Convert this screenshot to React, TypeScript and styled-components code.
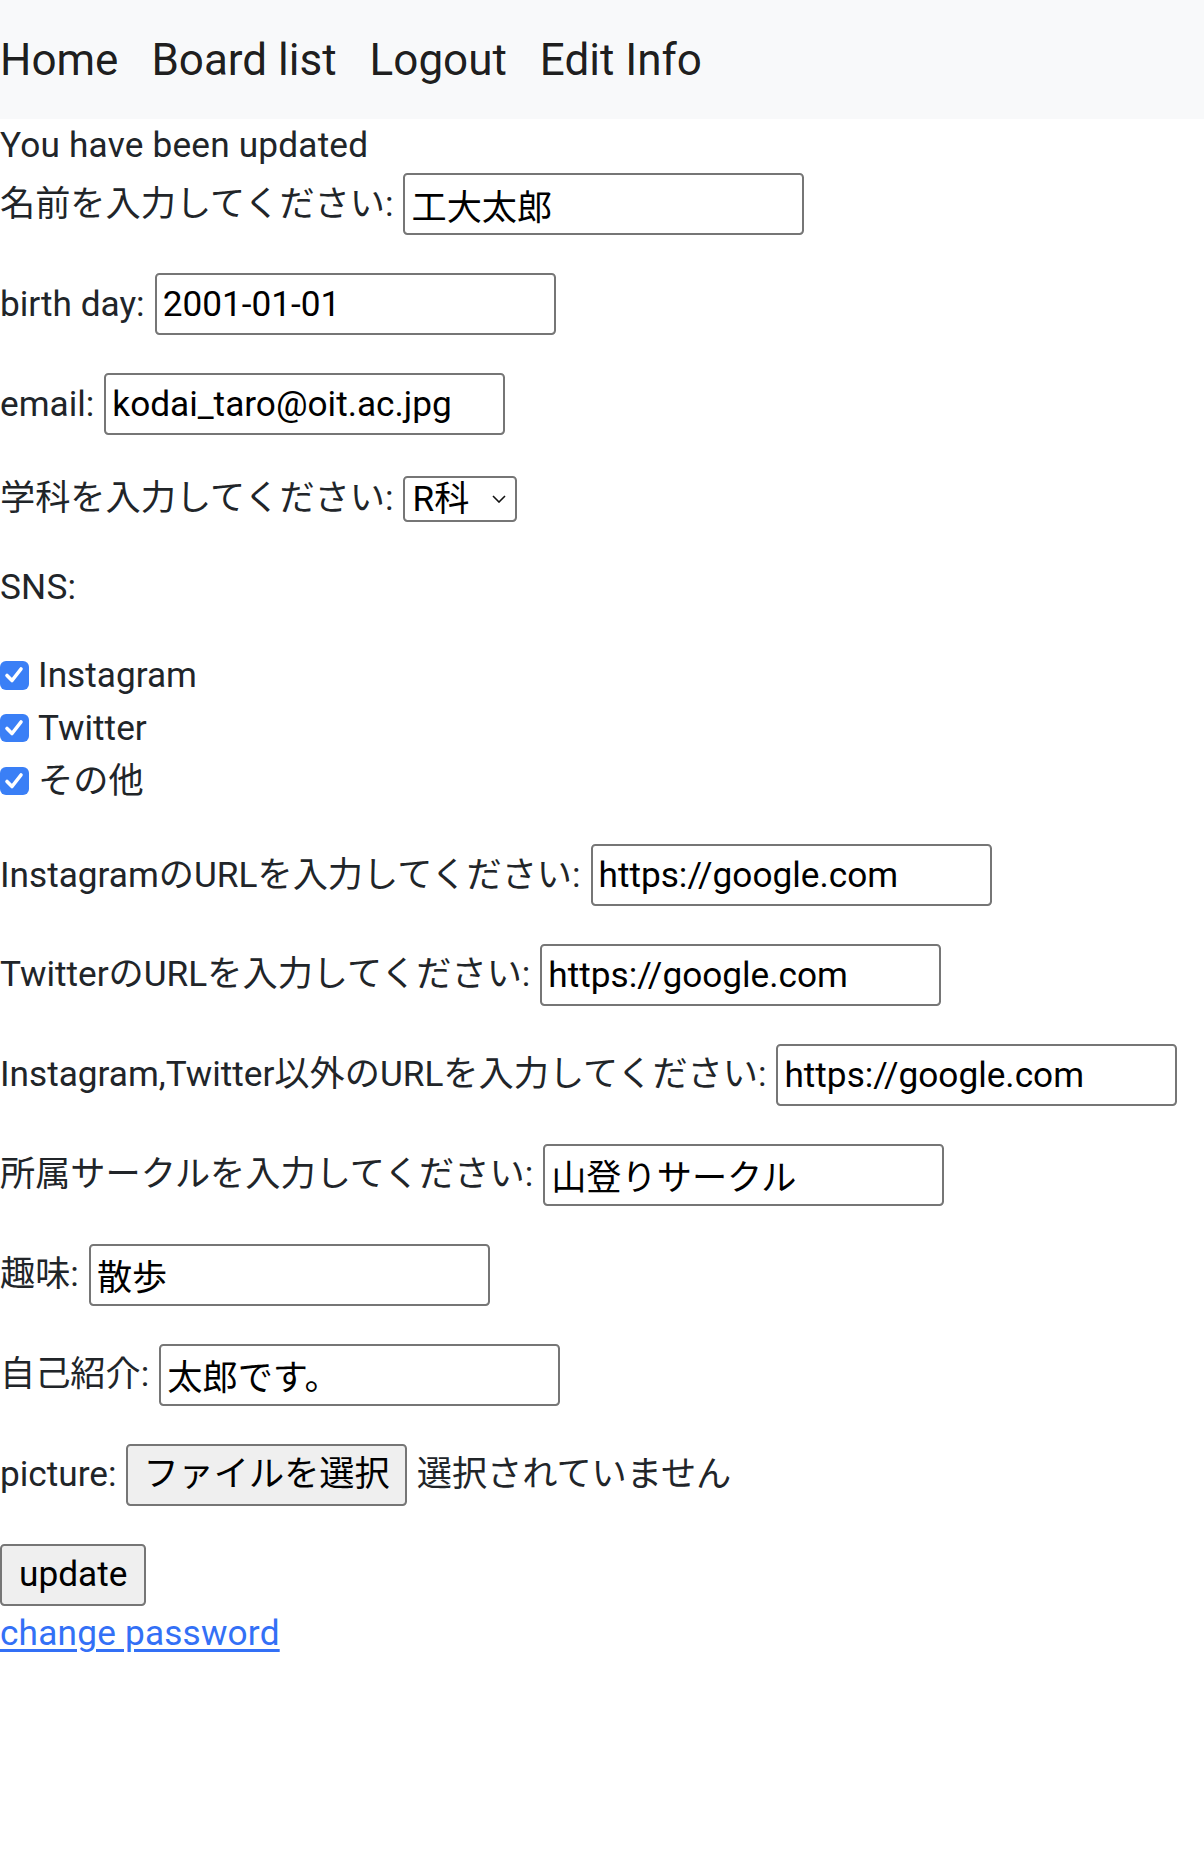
import React from "react";
import styled, { createGlobalStyle } from "styled-components";

const GlobalStyle = createGlobalStyle`
  html, body {
    margin: 0;
    padding: 0;
    background: #ffffff;
  }
  body {
    font-family: Roboto, "Noto Sans CJK JP", sans-serif;
    font-size: 35.2px;
    line-height: 1.5;
    color: #212529;
  }
  *, *::before, *::after {
    box-sizing: border-box;
  }
`;

const NavBar = styled.nav`
  display: flex;
  align-items: center;
  gap: 33px;
  height: 119px;
  background: #f8f9fa;
`;

const NavLink = styled.a`
  font-size: 44px;
  line-height: 1.5;
  color: rgba(0, 0, 0, 0.9);
  text-decoration: none;
  cursor: pointer;
`;

const Main = styled.main`
  display: block;
`;

const Line = styled.div<{ $mb?: number }>`
  height: 52.8px;
  margin-bottom: ${(p) => p.$mb ?? 0}px;
  white-space: nowrap;
  letter-spacing: 0.2px;
`;

const Row = styled.div<{ $h?: number; $mb?: number }>`
  display: flex;
  align-items: center;
  gap: 10px;
  height: ${(p) => p.$h ?? 64.8}px;
  margin-bottom: ${(p) => p.$mb ?? 35.2}px;
  white-space: nowrap;
`;

const Label = styled.label`
  color: #212529;
`;

const TextInput = styled.input`
  width: 401px;
  height: 62px;
  border: 2px solid #767676;
  border-radius: 4.4px;
  padding: 0 6px;
  font: inherit;
  color: #000;
  background: #fff;
  outline: none;
`;

const SelectWrap = styled.div`
  position: relative;
  display: inline-flex;
`;

const Select = styled.select`
  appearance: none;
  -webkit-appearance: none;
  width: 114px;
  height: 46px;
  border: 2px solid #767676;
  border-radius: 4.4px;
  padding: 0 0 0 7px;
  font-family: inherit;
  font-size: 35.2px;
  line-height: normal;
  color: #000;
  background: #fff;
  outline: none;
`;

const Chevron = styled.svg`
  position: absolute;
  right: 11px;
  top: 50%;
  margin-top: -4px;
  width: 14px;
  height: 8px;
  pointer-events: none;
`;

const CheckGroup = styled.div`
  margin-bottom: 35.2px;
`;

const CheckRow = styled.label`
  display: flex;
  align-items: center;
  gap: 9.5px;
  height: 52.8px;
`;

const CheckBox = styled.span`
  display: inline-flex;
  align-items: center;
  justify-content: center;
  width: 28.6px;
  height: 28.6px;
  border-radius: 6px;
  background: #3a7ff6;
  flex-shrink: 0;
`;

const Button = styled.button<{ $px?: number }>`
  height: 62px;
  padding: 0 ${(p) => p.$px ?? 16}px;
  border: 2px solid #767676;
  border-radius: 4.4px;
  background: #efefef;
  font: inherit;
  color: #000;
  cursor: pointer;
`;

const FileStatus = styled.span`
  color: #212529;
`;

const PasswordLink = styled.a`
  display: inline-block;
  height: 52.8px;
  color: #3370f6;
  text-decoration: underline;
  text-underline-offset: 4px;
  letter-spacing: 0.2px;
  cursor: pointer;
`;

const Check = () => (
  <svg width="20" height="18" viewBox="0 0 20 18">
    <polyline
      points="3,9.5 8,14.5 17,3"
      fill="none"
      stroke="#ffffff"
      strokeWidth="3.6"
      strokeLinecap="round"
      strokeLinejoin="round"
    />
  </svg>
);

type Field = { label: string; value: string };

const urlFields: Field[] = [
  { label: "InstagramのURLを入力してください:", value: "https://google.com" },
  { label: "TwitterのURLを入力してください:", value: "https://google.com" },
  { label: "Instagram,Twitter以外のURLを入力してください:", value: "https://google.com" },
  { label: "所属サークルを入力してください:", value: "山登りサークル" },
  { label: "趣味:", value: "散歩" },
  { label: "自己紹介:", value: "太郎です。" },
];

const TextField = ({ label, value }: Field) => (
  <Row>
    <Label>{label}</Label>
    <TextInput type="text" defaultValue={value} />
  </Row>
);

export default function App() {
  return (
    <>
      <GlobalStyle />
      <NavBar>
        <NavLink>Home</NavLink>
        <NavLink>Board list</NavLink>
        <NavLink>Logout</NavLink>
        <NavLink>Edit Info</NavLink>
      </NavBar>
      <Main>
        <Line>You have been updated</Line>
        <TextField label="名前を入力してください:" value="工大太郎" />
        <TextField label="birth day:" value="2001-01-01" />
        <TextField label="email:" value="kodai_taro@oit.ac.jpg" />
        <Row $h={54}>
          <Label>学科を入力してください:</Label>
          <SelectWrap>
            <Select defaultValue="R">
              <option value="R">R科</option>
            </Select>
            <Chevron viewBox="0 0 14 8">
              <polyline points="1,1 7,7 13,1" fill="none" stroke="#111" strokeWidth="1.6" />
            </Chevron>
          </SelectWrap>
        </Row>
        <Line $mb={35.2}>SNS:</Line>
        <CheckGroup>
          {["Instagram", "Twitter", "その他"].map((s) => (
            <CheckRow key={s}>
              <CheckBox role="checkbox" aria-checked="true">
                <Check />
              </CheckBox>
              {s}
            </CheckRow>
          ))}
        </CheckGroup>
        {urlFields.map((f) => (
          <TextField key={f.label} {...f} />
        ))}
        <Row>
          <Label>picture:</Label>
          <Button type="button" $px={15}>ファイルを選択</Button>
          <FileStatus>選択されていません</FileStatus>
        </Row>
        <Row $mb={0}>
          <Button type="submit" $px={17}>update</Button>
        </Row>
        <PasswordLink>change password</PasswordLink>
      </Main>
    </>
  );
}
